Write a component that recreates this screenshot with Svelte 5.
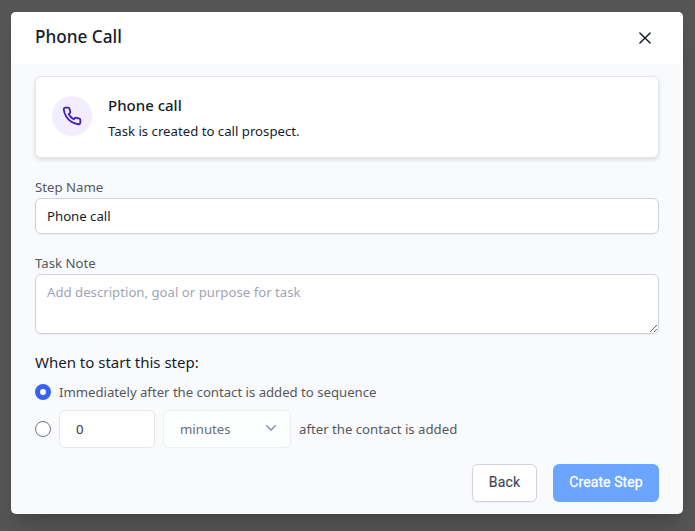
<script>
  let name = $state('Phone call');
  let note = $state('');
  let start = $state('now');
  let amount = $state('0');
</script>

<div class="overlay">
  <div class="modal" role="dialog" aria-label="Phone Call">
    <header>
      <h2>Phone Call</h2>
      <button class="close" aria-label="Close">
        <svg width="24" height="24" viewBox="0 0 24 24" fill="none" stroke="#111827" stroke-width="1.4" stroke-linecap="round"><path d="M6.9 6.9 17.1 17.1M17.1 6.9 6.9 17.1" /></svg>
      </button>
    </header>
    <div class="body">
      <section class="card">
        <div class="badge">
          <svg width="20" height="20" viewBox="0 0 24 24" fill="none" stroke="#4421b5" stroke-width="2.2" stroke-linecap="round" stroke-linejoin="round"><path d="M22 16.92v3a2 2 0 0 1-2.18 2 19.79 19.79 0 0 1-8.63-3.07 19.5 19.5 0 0 1-6-6 19.79 19.79 0 0 1-3.07-8.67A2 2 0 0 1 4.11 2h3a2 2 0 0 1 2 1.72c.13.96.36 1.9.7 2.81a2 2 0 0 1-.45 2.11L8.09 9.91a16 16 0 0 0 6 6l1.27-1.27a2 2 0 0 1 2.11-.45c.91.34 1.85.57 2.81.7A2 2 0 0 1 22 16.92z" /></svg>
        </div>
        <div>
          <h3>Phone call</h3>
          <p class="desc">Task is created to call prospect.</p>
        </div>
      </section>

      <label class="field-label" for="name">Step Name</label>
      <input id="name" class="text" bind:value={name} />
      <label class="field-label" for="note">Task Note</label>
      <textarea id="note" placeholder="Add description, goal or purpose for task" bind:value={note}></textarea>

      <h4>When to start this step:</h4>
      <div class="option first">
        <input type="radio" name="start" value="now" bind:group={start} aria-label="Immediately" />
        <span class="now">Immediately after the contact is added to sequence</span>
      </div>
      <div class="option second">
        <input type="radio" name="start" value="later" bind:group={start} aria-label="Later" />
        <input class="amount" bind:value={amount} aria-label="Amount" />
        <button class="unit">
          <span>minutes</span>
          <svg width="12" height="8" viewBox="0 0 12 8" fill="none" stroke="#9497a8" stroke-width="1.6"><path d="M1.2 1.2 6 6 10.8 1.2" /></svg>
        </button>
        <span>after the contact is added</span>
      </div>
      <footer>
        <button class="back">Back</button>
        <button class="create">Create Step</button>
      </footer>
    </div>
  </div>
</div>

<style>
  :global(body) { margin: 0; background: #555; }
  * { box-sizing: border-box; }
  h2, h3, h4, p { margin: 0; white-space: nowrap; }
  button, input, textarea { font: inherit; margin: 0; }
  .overlay {
    height: 531px;
    overflow: hidden;
    padding: 12px 12px 17px 11px;
    background: #555;
    font-family: "Noto Sans", "Open Sans", sans-serif;
    font-size: 13.2px;
    line-height: 20px;
    color: #161c2d;
  }
  .modal {
    height: 502px;
    border-radius: 5px;
    overflow: hidden;
    background: #f9fafc;
    box-shadow: 0 20px 25px -5px rgba(0, 0, 0, .12), 0 8px 10px -6px rgba(0, 0, 0, .12);
  }
  header {
    height: 52px;
    padding: 0 26px 0 24px;
    background: #fff;
    display: flex;
    justify-content: space-between;
    align-items: center;
  }
  h2 { font-size: 17.2px; font-weight: 500; line-height: 24px; margin-top: -2px; }
  .close { border: 0; padding: 0; background: none; display: flex; }
  .body { padding: 12px 24px; display: flex; flex-direction: column; }
  .card {
    height: 82px;
    padding: 0 16px;
    display: flex;
    align-items: center;
    gap: 16px;
    background: #fff;
    border: 1px solid #e4e6ec;
    border-radius: 6px;
    box-shadow: 0 2px 4px rgba(0, 0, 0, .12);
  }
  .badge {
    width: 40px;
    height: 40px;
    margin-bottom: 2px;
    border-radius: 50%;
    background: #f2edff;
    display: flex;
    align-items: center;
    justify-content: center;
  }
  h3 { font-size: 15px; font-weight: 500; line-height: 24px; }
  .desc { line-height: 20px; margin-top: 4px; }
  .field-label { color: #55585c; height: 21px; margin-top: 19px; }
  .text, textarea {
    width: 624px;
    padding: 0 11px;
    border: 1px solid #d1d3dc;
    border-radius: 6px;
    background: #fff;
    color: #161c2d;
    box-shadow: 0 1px 2px rgba(0, 0, 0, .05);
    outline: none;
  }
  .text { height: 36px; }
  textarea { height: 60px; padding-top: 7px; display: block; }
  textarea::placeholder { color: #9fa5b4; opacity: 1; }
  h4 { font-size: 15px; font-weight: 400; line-height: 24px; margin-top: 16px; }
  .option { display: flex; align-items: center; gap: 8px; color: #55585c; white-space: nowrap; }
  .first { height: 20px; margin-top: 8px; }
  .now { letter-spacing: -.02px; }
  .second { height: 38px; margin-top: 8px; }
  input[type="radio"] {
    appearance: none;
    width: 16px;
    height: 16px;
    border: 1px solid #70737f;
    border-radius: 50%;
    background: #fff;
  }
  input[type="radio"]:checked { border: 5px solid #3563ee; }
  .amount, .unit {
    height: 38px;
    border: 1px solid #e7e8ec;
    border-radius: 6px;
    background: #fff;
    padding: 0 16px;
    outline: none;
  }
  .amount { width: 96px; color: #30343f; }
  .unit {
    width: 128px;
    padding-right: 13px;
    background: #fdfefe;
    border-color: #eceef1;
    color: #6a6e7a;
    display: flex;
    align-items: center;
    justify-content: space-between;
  }
  .unit svg { margin-bottom: 2px; }
  footer {
    margin-top: 16px;
    display: flex;
    justify-content: flex-end;
    gap: 16px;
    font: 400 14px/20px Roboto, sans-serif;
  }
  footer button { height: 38px; border-radius: 6px; padding: 0 0 2px; -webkit-text-stroke: .15px currentColor; }
  .back { width: 65px; border: 1px solid #d1d3dc; background: #fff; color: #414754; box-shadow: 0 1px 2px rgba(0, 0, 0, .05); letter-spacing: .15px; }
  .create { width: 106px; border: 0; background: #6ca5ff; color: #fff; letter-spacing: .08px; -webkit-text-stroke-width: .3px; }
</style>
